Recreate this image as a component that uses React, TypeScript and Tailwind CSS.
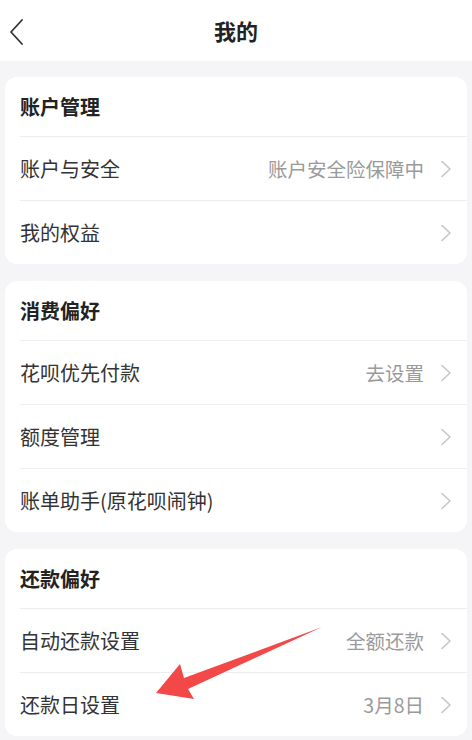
import React from "react";

const Chevron = () => (
  <svg width="12" height="18" viewBox="0 0 12 18" fill="none" className="shrink-0">
    <path d="M2 1.5 L10 9 L2 16.5" stroke="#c6c6c6" strokeWidth="1.6" strokeLinecap="round" strokeLinejoin="round" />
  </svg>
);

type Row = { label: string; value?: string };

const Section = ({ title, rows }: { title: string; rows: Row[] }) => (
  <div className="mx-[5px] rounded-[12px] bg-white">
    <div className="h-[59px] flex items-center pl-[15px] text-[20px] font-semibold text-[#222]">{title}</div>
    {rows.map((r) => (
      <div key={r.label} className="ml-[15px] h-[64px] flex items-center border-t border-[#ededed] pr-[15px]">
        <div className="flex-1 text-[20px] text-[#333]">{r.label}</div>
        {r.value && <div className="text-[19.5px] text-[#9a9a9a] mr-[16px]">{r.value}</div>}
        <Chevron />
      </div>
    ))}
  </div>
);

export default function App() {
  return (
    <div
      className="relative w-[472px] h-[740px] overflow-hidden bg-[#f5f5f7]"
      style={{ fontFamily: '"Noto Sans CJK SC", "Noto Sans", sans-serif' }}
    >
      <div className="h-[61px] bg-white flex items-center relative">
        <svg width="16" height="28" viewBox="0 0 16 28" fill="none" className="absolute left-[9px] top-[18px]">
          <path d="M13 2 L2 14 L13 26" stroke="#333" strokeWidth="1.8" strokeLinecap="round" strokeLinejoin="round" />
        </svg>
        <div className="flex-1 text-center text-[22px] font-bold text-[#222]">我的</div>
      </div>
      <div className="flex flex-col gap-[17px] pt-[16px]">
        <Section
          title="账户管理"
          rows={[
            { label: "账户与安全", value: "账户安全险保障中" },
            { label: "我的权益" },
          ]}
        />
        <Section
          title="消费偏好"
          rows={[
            { label: "花呗优先付款", value: "去设置" },
            { label: "额度管理" },
            { label: "账单助手(原花呗闹钟)" },
          ]}
        />
        <Section
          title="还款偏好"
          rows={[
            { label: "自动还款设置", value: "全额还款" },
            { label: "还款日设置", value: "3月8日" },
          ]}
        />
      </div>
      <svg className="absolute left-0 top-0 pointer-events-none" width="472" height="740" viewBox="0 0 472 740">
        <polygon
          points="156,693 180,664 184,678 322,627 188,689 194,699"
          fill="#f24848"
        />
      </svg>
    </div>
  );
}
